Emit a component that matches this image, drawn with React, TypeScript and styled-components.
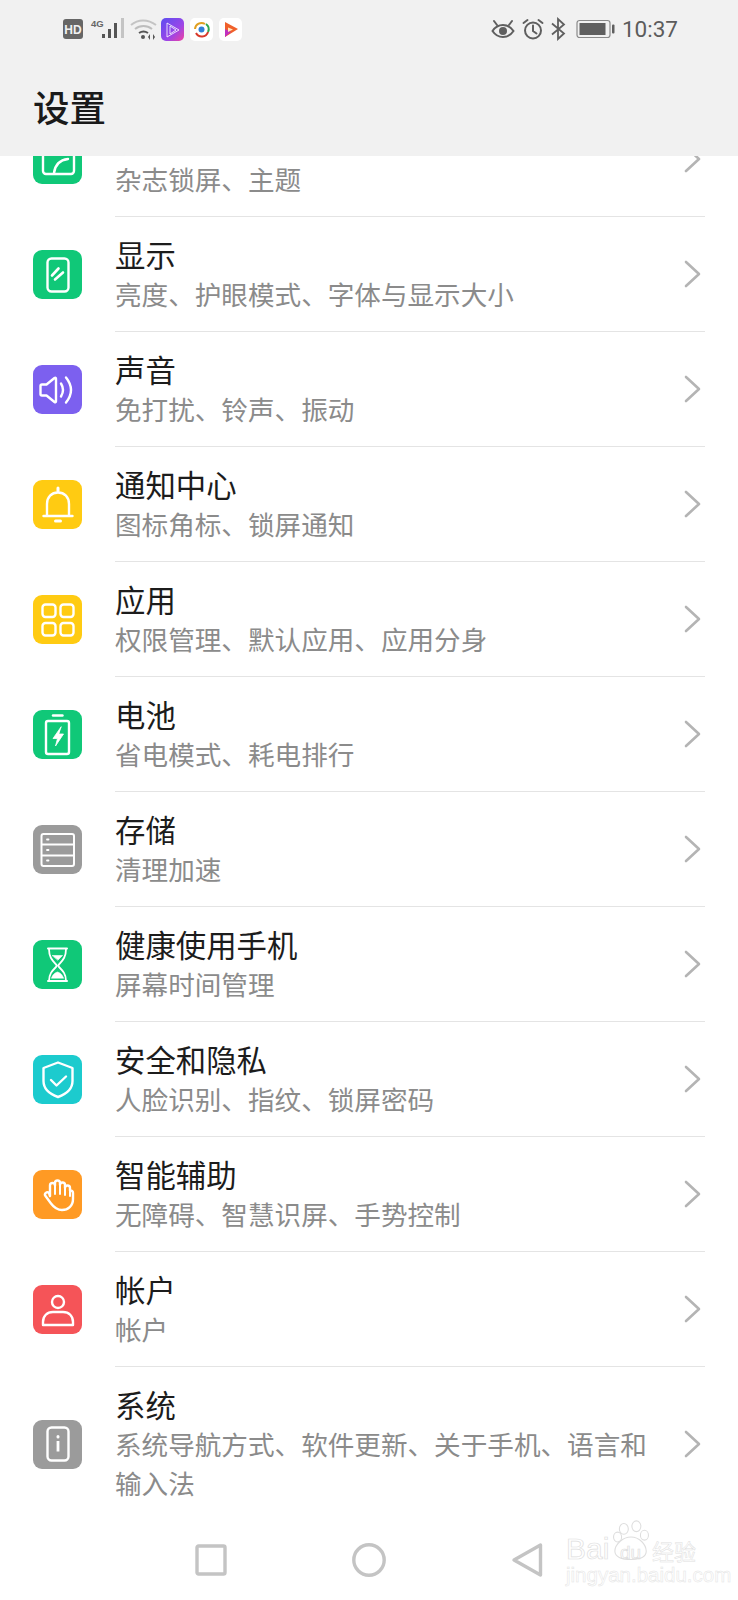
import React from "react";
import styled, { createGlobalStyle } from "styled-components";

const GlobalStyle = createGlobalStyle`
  html, body {
    margin: 0;
    padding: 0;
    background: #ffffff;
  }
  * {
    box-sizing: border-box;
  }
`;

const Screen = styled.div`
  position: relative;
  width: 738px;
  height: 1600px;
  overflow: hidden;
  display: flex;
  flex-direction: column;
  background: #ffffff;
  font-family: "Noto Sans CJK SC", "Noto Sans", sans-serif;
`;

const Header = styled.header`
  height: 156px;
  flex: none;
  background: #f1f1f1;
  display: flex;
  flex-direction: column;
`;

const StatusBar = styled.div`
  height: 58px;
  padding: 0 60px 0 63px;
  display: flex;
  align-items: center;
  justify-content: space-between;
  color: #5f5f5f;
`;

const StatusGroup = styled.div<{ $gap: number }>`
  display: flex;
  align-items: center;
  gap: ${(p) => p.$gap}px;
`;

const Clock = styled.span`
  font-family: Roboto, "Liberation Sans", sans-serif;
  font-size: 22.5px;
  color: #5c5c5c;
`;

const PageTitle = styled.h1`
  margin: 0;
  padding: 24px 0 0 33px;
  font-size: 36.5px;
  line-height: 50px;
  font-weight: 500;
  color: #1a1a1a;
`;

const List = styled.div`
  flex: 1;
  overflow: hidden;
`;

const Row = styled.div<{ $clipped?: boolean }>`
  display: flex;
  align-items: center;
  padding-left: 33px;
  margin-top: ${(p) => (p.$clipped ? "-54px" : "0")};
`;

const IconTile = styled.div<{ $color: string }>`
  width: 49px;
  height: 49px;
  flex: none;
  border-radius: 9px;
  background: ${(p) => p.$color};
  margin-right: 33px;
  display: flex;
  align-items: center;
  justify-content: center;
  overflow: hidden;
  color: #ffffff;
`;

const RowBody = styled.div<{ $last?: boolean }>`
  flex: 1;
  margin-right: 33px;
  min-height: 115px;
  padding: 18px 4px ${(p) => (p.$last ? "19px" : "17.5px")} 0;
  display: flex;
  align-items: center;
  justify-content: space-between;
  border-bottom: ${(p) => (p.$last ? "none" : "1.5px solid #e4e4e4")};
`;

const RowText = styled.div`
  width: 540px;
`;

const RowTitle = styled.div`
  min-height: 39px;
  font-size: 30.4px;
  line-height: 39px;
  color: #1c1c1c;
`;

const RowSub = styled.div`
  font-size: 26.6px;
  line-height: 39px;
  color: #8b8b8b;
`;

const Chevron = styled.svg`
  width: 17px;
  height: 28px;
  flex: none;
`;

const NavBar = styled.nav`
  height: 80px;
  flex: none;
  display: grid;
  grid-template-columns: repeat(3, 158px);
  justify-content: center;
  align-items: center;
`;

const NavSlot = styled.div`
  display: flex;
  justify-content: center;
`;

const Watermark = styled.div`
  position: absolute;
  left: 565px;
  top: 1520px;
  width: 136px;
  height: 66px;
  color: transparent;
  font-family: "Liberation Sans", sans-serif;
  -webkit-text-stroke: 0.7px #dedede;
`;

const MarkMain = styled.div`
  position: absolute;
  left: 1px;
  top: 14px;
  font-size: 30px;
  line-height: 30px;
`;

const MarkDu = styled.div`
  position: absolute;
  left: 55px;
  top: 24px;
  font-size: 19px;
  line-height: 18px;
`;

const MarkCn = styled.div`
  position: absolute;
  left: 87px;
  top: 17px;
  font-family: "Noto Sans CJK SC", sans-serif;
  font-size: 22px;
  line-height: 26px;
  -webkit-text-stroke: 0.5px #e0e0e0;
`;

const MarkUrl = styled.div`
  position: absolute;
  left: 1px;
  top: 46px;
  font-size: 20.5px;
  line-height: 18px;
  white-space: nowrap;
  -webkit-text-stroke: 0.5px #e4e4e4;
`;

const MarkPaw = styled.svg`
  position: absolute;
  left: 46px;
  top: 0;
  width: 40px;
  height: 43px;
`;

type SvgProps = { children: React.ReactNode };

function Glyph({ children }: SvgProps) {
  return (
    <svg
      width="50"
      height="50"
      viewBox="0 0 50 50"
      fill="none"
      stroke="#fff"
      strokeWidth="2.4"
      strokeLinecap="round"
      strokeLinejoin="round"
      style={{ flex: "none" }}
    >
      {children}
    </svg>
  );
}

const ThemeIcon = () => (
  <Glyph>
    <rect x="10" y="11" width="31" height="28" rx="3" />
    <path d="M21 38c1-8 6-13 14-14" />
  </Glyph>
);

const DisplayIcon = () => (
  <Glyph>
    <rect x="14.5" y="8.5" width="21" height="33" rx="4" />
    <path d="M19 25.5l6.5-7M22 29.5l8-7" strokeWidth="2.6" />
  </Glyph>
);

const SoundIcon = () => (
  <Glyph>
    <path d="M7.500 21c0-1 .6-1.500 1.500-1.500h4.500l8-6.500c.8-.6 1.500-.3 1.500.7v22.600c0 1-.7 1.300-1.500.7l-8-6.500H9c-.9 0-1.500-.5-1.500-1.500z" />
    <path d="M28 18.500q4 6.500 0 13M33 12.500q10 12.500 0 25" />
  </Glyph>
);

const BellIcon = () => (
  <Glyph>
    <path d="M10.500 36h29M14 36V24c0-7 4.500-11.500 11-11.500S36 17 36 24v12" />
    <path d="M25 8v3M22.500 41h5" strokeWidth="3" />
  </Glyph>
);

const AppsIcon = () => (
  <Glyph>
    <rect x="9.500" y="9.500" width="13" height="12.500" rx="3" />
    <rect x="27.500" y="9.500" width="13" height="12.500" rx="3" />
    <rect x="9.500" y="28" width="13" height="12.500" rx="3" />
    <rect x="27.500" y="28" width="13" height="12.500" rx="3" />
  </Glyph>
);

const BatteryIcon = () => (
  <Glyph>
    <path d="M20 5.500h9.500" />
    <rect x="13" y="11" width="23" height="33" rx="2" />
    <path d="M28 17l-8 11.500h4.500l-2 7.500 8-12h-4.500z" fill="#fff" strokeWidth="0.8" />
  </Glyph>
);

const StorageIcon = () => (
  <Glyph>
    <rect x="8.500" y="9" width="32.500" height="32" rx="2" strokeWidth="2" />
    <path d="M9 19.500h32M9 30.500h32" strokeWidth="2" />
    <path d="M14 14.500h1.500M14 25h1.500M14 35.500h1.500" strokeWidth="1.800" />
  </Glyph>
);

const HourglassIcon = () => (
  <Glyph>
    <path d="M15 8.500h19" strokeWidth="2" />
    <path d="M15 41h19" strokeWidth="2" />
    <path d="M16 9c0 8 3 11 7 15.500 1 1 1 1.500 0 2.500-4 4-7 7-7 14M33 9c0 8-3 11-7 15.500-1 1-1 1.500 0 2.500 4 4 7 7 7 14" strokeWidth="1.800" />
    <path d="M19.500 15.500h10L25 20zM18.500 38c1-3 3.500-5.500 6-6 2.500.5 5 3 6 6z" fill="#fff" strokeWidth="0.6" />
  </Glyph>
);

const ShieldIcon = () => (
  <Glyph>
    <path d="M25 7.500l14.500 5.500v13c0 8-6 13-14.500 16-8.500-3-14.500-8-14.500-16V13z" />
    <path d="M18 25l5.500 5.500L33 21.500" />
  </Glyph>
);

const HandIcon = () => (
  <Glyph>
    <path d="M17 26V15.500a2.500 2.500 0 0 1 5 0V13a2.500 2.500 0 0 1 5 0v2a2.500 2.500 0 0 1 5 0v3a2.500 2.500 0 0 1 5 0v2.500a2.500 2.500 0 0 1 3 2.500v6c0 7-5 11-11 11-5 0-8-2.500-11-6.500l-5.500-7.500c-1.800-2.500 1.500-5 3.500-3z" />
    <path d="M22 15.500V24M27 15v9M32 17v8M37 20v6" strokeWidth="2" />
  </Glyph>
);

const PersonIcon = () => (
  <Glyph>
    <circle cx="25" cy="17" r="6" />
    <path d="M10 40v-3c0-6 4-10 10-10h10c6 0 10 4 10 10v3z" />
  </Glyph>
);

const InfoIcon = () => (
  <Glyph>
    <rect x="14.500" y="8.500" width="21" height="33" rx="4" />
    <path d="M25 22v10.500" strokeWidth="2.800" strokeLinecap="butt" />
    <path d="M25 17.500v.5" strokeWidth="3" />
  </Glyph>
);

type Item = {
  title: string;
  sub: string;
  color: string;
  icon: React.ReactNode;
};

const items: Item[] = [
  { title: "", sub: "杂志锁屏、主题", color: "#10c878", icon: <ThemeIcon /> },
  { title: "显示", sub: "亮度、护眼模式、字体与显示大小", color: "#10c878", icon: <DisplayIcon /> },
  { title: "声音", sub: "免打扰、铃声、振动", color: "#7c60ef", icon: <SoundIcon /> },
  { title: "通知中心", sub: "图标角标、锁屏通知", color: "#ffcb12", icon: <BellIcon /> },
  { title: "应用", sub: "权限管理、默认应用、应用分身", color: "#ffcb12", icon: <AppsIcon /> },
  { title: "电池", sub: "省电模式、耗电排行", color: "#10c878", icon: <BatteryIcon /> },
  { title: "存储", sub: "清理加速", color: "#9b9b9b", icon: <StorageIcon /> },
  { title: "健康使用手机", sub: "屏幕时间管理", color: "#10c878", icon: <HourglassIcon /> },
  { title: "安全和隐私", sub: "人脸识别、指纹、锁屏密码", color: "#1ccbce", icon: <ShieldIcon /> },
  { title: "智能辅助", sub: "无障碍、智慧识屏、手势控制", color: "#ff9a24", icon: <HandIcon /> },
  { title: "帐户", sub: "帐户", color: "#f55458", icon: <PersonIcon /> },
  { title: "系统", sub: "系统导航方式、软件更新、关于手机、语言和输入法", color: "#9b9b9b", icon: <InfoIcon /> },
];

function SignalIcons() {
  return (
    <svg width="94" height="24" viewBox="0 -1 94 24" fill="none">
      <rect x="0" y="1" width="20" height="20" rx="3" fill="#666" />
      <text x="10" y="16" textAnchor="middle" fontFamily="Liberation Sans" fontWeight="700" fontSize="12" fill="#f1f1f1">HD</text>
      <text x="28" y="9" fontFamily="Liberation Sans" fontWeight="700" fontSize="9.500" fill="#666">4G</text>
      <rect x="39" y="16" width="3" height="4" fill="#555" />
      <rect x="45" y="11" width="3" height="9" fill="#555" />
      <rect x="51" y="5" width="3" height="15" fill="#555" />
      <rect x="58" y="0" width="3" height="20" fill="#c4c4c4" />
      <path d="M68 7c7-6 17-6 25 0" stroke="#c4c4c4" strokeWidth="2" />
      <path d="M72 11c5-4 12-4 17 0" stroke="#bdbdbd" strokeWidth="2" />
      <path d="M76 15c3-2 6-2 9 0" stroke="#555" strokeWidth="2" />
      <circle cx="80" cy="19" r="2" fill="#555" />
      <path d="M87 16l-2 3 2 3zM90 16l2 3-2 3z" fill="#555" />
    </svg>
  );
}

function AppBadges() {
  return (
    <svg width="82" height="24" viewBox="0 -1 82 24" fill="none">
      <defs>
        <linearGradient id="vid" x1="0" y1="0" x2="1" y2="1">
          <stop offset="0" stopColor="#5c4ff0" />
          <stop offset="0.6" stopColor="#9a45e8" />
          <stop offset="1" stopColor="#f040a0" />
        </linearGradient>
      </defs>
      <rect x="0" y="0" width="23" height="23" rx="5" fill="url(#vid)" />
      <path d="M6 5l12 7-12 7zM9 8l6 4-6 4z" stroke="#fff" strokeWidth="0.8" />
      <rect x="29" y="0" width="23" height="23" rx="5" fill="#fff" />
      <path d="M34 11a6.500 6.500 0 0 1 10-5" stroke="#e0a020" strokeWidth="2" />
      <path d="M45 6a6.500 6.500 0 0 1 2 8" stroke="#2fa84f" strokeWidth="2" />
      <path d="M47 14a6.500 6.500 0 0 1-12 1" stroke="#d8392b" strokeWidth="2" />
      <circle cx="40.500" cy="11.500" r="3" fill="#2f80d8" />
      <rect x="58" y="0" width="23" height="23" rx="5" fill="#fff" />
      <path d="M64 4l13 7-13 8z" fill="#f0602a" />
      <path d="M64 11l6 3-6 5z" fill="#c030c0" />
      <path d="M67 9.500l5 2-5 2.500z" fill="#ffe8c0" />
    </svg>
  );
}

function RightIcons() {
  return (
    <>
      <svg width="24" height="22" viewBox="0 0 24 22" fill="none" stroke="#5f5f5f" strokeWidth="2">
        <path d="M1.500 13c3-4.500 6.500-6 10.500-6s7.500 1.500 10.500 6c-3 4.500-6.500 6-10.500 6S4.500 17.500 1.500 13z" />
        <circle cx="12" cy="13" r="4" fill="#5f5f5f" stroke="none" />
        <path d="M3 3l3 4M21 3l-3 4" strokeLinecap="round" />
      </svg>
      <svg width="22" height="22" viewBox="0 0 22 22" fill="none" stroke="#5f5f5f" strokeWidth="2">
        <circle cx="11" cy="12.500" r="8" />
        <path d="M11 7.500v5.500l3.500 2.500M1.500 5l4-3M20.500 5l-4-3" strokeLinecap="round" />
      </svg>
      <svg width="18" height="24" viewBox="0 0 18 24" fill="none" stroke="#5f5f5f" strokeWidth="1.800">
        <path d="M1 6.500l12 10-6 5.500V2l6 5.500-12 10" />
      </svg>
      <svg width="39" height="20" viewBox="0 0 39 20" fill="none">
        <rect x="1" y="1.500" width="33" height="17" rx="2.500" stroke="#8a8a8a" strokeWidth="1.200" />
        <rect x="3.500" y="4" width="26" height="12" fill="#5f5f5f" />
        <rect x="36" y="5.500" width="2.500" height="9" rx="1" fill="#5f5f5f" />
      </svg>
    </>
  );
}

export default function App() {
  return (
    <Screen>
      <GlobalStyle />
      <Header>
        <StatusBar>
          <StatusGroup $gap={4}>
            <SignalIcons />
            <AppBadges />
          </StatusGroup>
          <StatusGroup $gap={7}>
            <RightIcons />
            <Clock>10:37</Clock>
          </StatusGroup>
        </StatusBar>
        <PageTitle>设置</PageTitle>
      </Header>
      <List>
        {items.map((item, i) => (
          <Row key={item.sub} $clipped={i === 0}>
            <IconTile $color={item.color}>{item.icon}</IconTile>
            <RowBody $last={i === items.length - 1}>
              <RowText>
                <RowTitle>{item.title}</RowTitle>
                <RowSub>{item.sub}</RowSub>
              </RowText>
              <Chevron viewBox="0 0 17 28" fill="none" stroke="#b4b4b4" strokeWidth="2.600" strokeLinecap="round" strokeLinejoin="round">
                <path d="M2 2l13 12L2 26" />
              </Chevron>
            </RowBody>
          </Row>
        ))}
      </List>
      <NavBar>
        <NavSlot>
          <svg width="32" height="32" viewBox="0 0 32 32" fill="none">
            <rect x="2" y="2" width="28" height="28" rx="1.500" stroke="#c4c4c4" strokeWidth="3.400" />
          </svg>
        </NavSlot>
        <NavSlot>
          <svg width="34" height="34" viewBox="0 0 34 34" fill="none">
            <circle cx="17" cy="17" r="15.200" stroke="#c4c4c4" strokeWidth="3.400" />
          </svg>
        </NavSlot>
        <NavSlot>
          <svg width="32" height="36" viewBox="0 0 32 36" fill="none">
            <path d="M29.500 3v30L3 18z" stroke="#c4c4c4" strokeWidth="3.400" strokeLinejoin="round" />
          </svg>
        </NavSlot>
      </NavBar>
      <Watermark>
        <MarkPaw viewBox="0 0 42 48" fill="none" stroke="#dedede" strokeWidth="1.200">
          <ellipse cx="13" cy="10" rx="5" ry="6" />
          <ellipse cx="27" cy="7" rx="5" ry="6" />
          <ellipse cx="36" cy="17" rx="4.500" ry="5.500" />
          <ellipse cx="6" cy="19" rx="4.500" ry="5.500" />
          <path d="M21 19c9 0 17 8 17 16 0 6-6 9-17 9S3 41 3 35c0-8 9-16 18-16z" />
        </MarkPaw>
        <MarkMain>Bai</MarkMain>
        <MarkDu>du</MarkDu>
        <MarkCn>经验</MarkCn>
        <MarkUrl>jingyan.baidu.com</MarkUrl>
      </Watermark>
    </Screen>
  );
}
